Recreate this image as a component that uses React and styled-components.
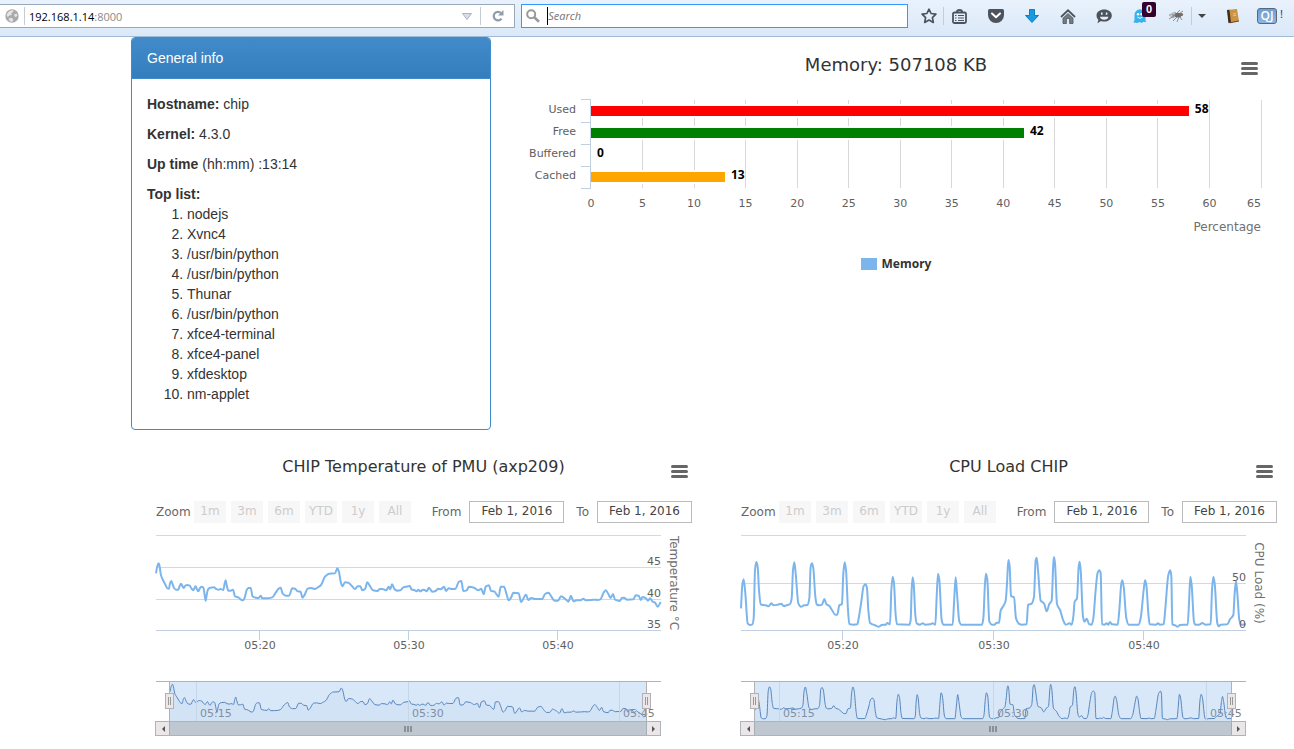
import React from "react";
import styled, { createGlobalStyle } from "styled-components";

const CHART_FONT = '"DejaVu Sans", Verdana, sans-serif';
const LABEL_FONT = '"Noto Sans", "Open Sans", sans-serif';

const GlobalStyle = createGlobalStyle`
  *, *::before, *::after { box-sizing: border-box; }
  body {
    margin: 0;
    background: #fff;
    color: #333;
    font: 14px/20px "Liberation Sans", Arial, sans-serif;
  }
  button, input { font: inherit; color: inherit; }
`;

/* ---------- browser bar ---------- */

const Toolbar = styled.header`
  display: flex;
  gap: 6px;
  height: 37px;
  padding-top: 4px;
  align-items: flex-start;
  background: linear-gradient(#e9f2fc, #dae8f8);
  border-bottom: 1px solid #a3bcd6;
`;

const Field = styled.div`
  display: flex;
  align-items: center;
  flex: ${(p) => p.$grow} 1 0;
  min-width: 0;
  height: 24px;
  background: #fff;
  border: 1px solid ${(p) => (p.$active ? "#3399ff" : "#97a9bb")};
  border-left-width: ${(p) => (p.$flush ? 0 : 1)}px;
`;

const Divider = styled.span`
  width: 1px;
  height: 18px;
  flex: none;
  background: #c5ccd4;
`;

const Address = styled.div`
  position: relative;
  flex: 1;
  height: 22px;
  margin-left: 4px;
  font: 11px/24px "Open Sans", "Noto Sans", sans-serif;
  color: #000;
`;

const AddressInput = styled.input`
  width: 100%;
  height: 22px;
  padding: 0;
  border: 0;
  outline: 0;
  background: transparent;
  color: transparent;
`;

const AddressText = styled.span`
  position: absolute;
  inset: 0;
  pointer-events: none;
  span { color: #8a8a8a; }
`;

const SearchInput = styled.input`
  flex: 1;
  height: 18px;
  min-width: 0;
  margin-left: 4px;
  padding: 0;
  border: 0;
  border-left: 1px solid #000;
  outline: 0;
  font: italic 11px/18px "Open Sans", "Noto Sans", sans-serif;
  &::placeholder { color: #757575; opacity: 1; }
`;

const IconButton = styled.button`
  display: flex;
  align-items: center;
  justify-content: center;
  position: relative;
  flex: none;
  width: ${(p) => p.$w || 36}px;
  height: 24px;
  padding: 0;
  border: 0;
  background: none;
  svg { display: block; overflow: visible; }
`;

const Tools = styled.nav`
  display: flex;
  align-items: center;
  flex: none;
  width: 380px;
  height: 24px;
  padding-left: 1px;
`;

const Badge = styled.span`
  position: absolute;
  top: -2px;
  left: 23px;
  width: 14px;
  height: 15px;
  border-radius: 2px;
  background: #33002f;
  color: #fff;
  font: bold 11px/15px "Liberation Sans", Arial, sans-serif;
  text-align: center;
`;

const QuickJava = styled.button`
  width: 20px;
  height: 16px;
  margin-left: 3px;
  padding: 0;
  border: 1px solid #55687f;
  border-radius: 3px;
  background: linear-gradient(#6f9fd4, #8db4de);
  color: #fff;
  font: 600 12px/14px "Open Sans", "Noto Sans", sans-serif;
`;

const Mark = styled.span`
  margin-left: 3px;
  padding-bottom: 4px;
  color: #4b2a94;
  font: 11px/14px "Noto Sans", sans-serif;
`;

/* ---------- page ---------- */

const Page = styled.main`
  max-width: 1279px;
  padding: 0 8px 0 131px;
`;

const TopRow = styled.div`
  display: grid;
  grid-template-columns: 360px minmax(0, 1fr);
  gap: 30px;
`;

const ChartRow = styled.div`
  display: grid;
  grid-template-columns: repeat(2, minmax(0, 1fr));
  gap: 30px;
  margin: 20px -15px 0 15px;
`;

const Panel = styled.section`
  border: 1px solid #428bca;
  border-radius: 4px;
  overflow: hidden;
`;

const PanelHead = styled.h3`
  margin: 0;
  padding: 10px 15px;
  border-bottom: 1px solid #428bca;
  background: linear-gradient(#428bca, #357ebd);
  color: #fff;
  font-size: 14px;
  font-weight: normal;
`;

const PanelBody = styled.div`
  padding: 15px;
`;

const Line = styled.p`
  margin: 0 0 ${(p) => (p.$tight ? 0 : 10)}px;
`;

const TopList = styled.ol`
  margin: 0 0 10px;
  padding-left: 40px;
`;

/* ---------- charts ---------- */

const ChartCard = styled.section`
  position: relative;
  min-width: 0;
  font-family: ${CHART_FONT};
`;

const ChartTitle = styled.h2`
  margin: 0;
  height: ${(p) => (p.$large ? 56 : 51)}px;
  line-height: ${(p) => (p.$large ? 56 : 34)}px;
  font-size: ${(p) => (p.$large ? 18 : 16)}px;
  font-weight: normal;
  text-align: center;
`;

const MenuButton = styled.button`
  position: absolute;
  top: ${(p) => p.$top}px;
  right: 13px;
  display: flex;
  flex-direction: column;
  gap: 2px;
  width: 17px;
  padding: 0;
  border: 0;
  background: none;
  span {
    height: 3px;
    border-radius: 2px;
    background: #666;
  }
`;

const Plot = styled.svg`
  display: block;
  width: 100%;
  height: auto;
  overflow: visible;
  font-family: ${CHART_FONT};
`;

const Legend = styled.div`
  display: flex;
  align-items: center;
  justify-content: center;
  gap: 5px;
  margin-top: 7px;
  font: bold 12px/20px ${LABEL_FONT};
  &::before {
    content: "";
    width: 16px;
    height: 12px;
    background: #7cb5ec;
  }
`;

const RangeBar = styled.div`
  display: flex;
  align-items: center;
  height: 22px;
  padding: 0 9px 0 10px;
  font-size: 12px;
  line-height: 20px;
  color: #666;
`;

const ZoomGroup = styled.div`
  display: flex;
  align-items: center;
  gap: 5px;
`;

const ZoomLabel = styled.span`
  width: 33px;
`;

const ZoomButton = styled.button`
  width: 32px;
  height: 22px;
  padding: 0 0 2px;
  border: 0;
  background: #f7f7f7;
  &:disabled { color: #ccc; }
`;

const DateGroup = styled.div`
  display: flex;
  align-items: center;
  gap: 8px;
  margin-left: auto;
  label + input + label { margin-left: 4px; }
`;

const DateInput = styled.input`
  width: 95px;
  height: 22px;
  padding: 0 0 2px;
  border: 1px solid #bbb;
  background: #fff;
  color: #444;
  text-align: center;
`;

const Scrollbar = styled.div`
  display: flex;
  height: 15px;
  margin: 0 40px 0 9px;
  border: 1px solid #b0b3b8;
`;

const ArrowButton = styled.button`
  display: flex;
  align-items: center;
  justify-content: center;
  flex: none;
  width: 13px;
  padding: 0;
  border: 0;
  background: #ebe7e8;
`;

const Thumb = styled.div`
  display: flex;
  flex: 1;
  align-items: center;
  justify-content: center;
  gap: 1px;
  background: #bfc8d1;
  border: solid #a7adb5;
  border-width: 0 1px;
  i { width: 2px; height: 6px; background: #8b9097; }
`;

/* Recorded traces, in thirds of a pixel. */
const TEMPERATURE = `33,130 37,108 41,100 44,110 48,136 54,150 62,166 67,175 72,176 75,160 79,153 83,163 87,174 93,179 100,179 104,168 108,161 112,168 116,174 120,168 126,165 134,167 139,175 145,181 149,173 152,169 156,178 160,184 165,174 170,170 175,173 179,195 182,212 185,195 189,178 196,173 207,172 214,177 221,179 227,177 235,180 239,160 242,151 245,165 250,182 257,182 264,179 270,199 280,202 287,208 294,211 299,203 305,180 310,174 317,174 323,200 333,203 341,204 347,197 352,205 365,205 382,202 392,188 400,177 407,173 413,191 422,197 432,197 442,175 450,176 458,184 467,185 472,203 478,196 488,176 498,174 510,177 520,171 528,165 540,140 552,131 570,130 577,115 582,126 587,155 592,169 600,157 610,158 620,167 630,177 638,169 646,169 652,181 660,177 667,157 674,167 684,181 697,183 705,177 716,178 724,181 731,170 736,178 741,163 749,178 758,182 766,181 775,172 790,169 794,167 800,179 808,180 815,184 820,179 826,184 832,180 837,179 845,184 852,173 862,185 872,183 879,176 887,178 897,170 903,183 911,175 922,177 932,176 941,156 949,153 955,183 965,181 972,170 987,173 1000,181 1009,176 1016,193 1022,170 1032,166 1038,183 1047,184 1061,200 1067,170 1077,170 1084,190 1091,211 1098,203 1105,188 1121,190 1128,216 1143,194 1150,210 1159,204 1170,207 1192,207 1200,192 1211,188 1219,200 1229,212 1239,212 1248,199 1261,207 1270,215 1278,197 1285,214 1295,211 1307,211 1315,206 1322,211 1340,210 1350,209 1358,210 1366,208 1375,190 1382,181 1390,192 1397,204 1404,192 1410,209 1425,213 1430,204 1437,203 1447,209 1465,208 1472,196 1481,197 1487,210 1493,201 1503,205 1509,212 1515,205 1523,215 1530,218 1538,230 1547,216`;

const CPU = `33,235 37,165 41,148 46,190 53,280 60,285 67,283 71,265 75,120 79,96 83,110 87,180 92,223 100,225 108,226 116,229 124,220 131,226 143,224 154,221 161,228 170,226 180,222 185,205 189,120 193,97 197,130 205,220 213,230 222,226 232,225 238,205 242,110 246,100 250,115 256,200 260,223 268,226 276,224 283,207 289,222 298,228 306,240 316,254 322,254 328,226 336,222 340,130 344,97 348,120 354,240 358,282 370,284 382,283 386,265 394,215 401,168 407,163 411,175 415,240 420,279 430,284 438,287 447,290 455,285 468,284 472,279 480,283 484,180 488,140 492,160 497,255 501,283 538,284 542,270 545,180 548,142 551,160 556,255 560,280 570,284 578,280 586,284 600,283 608,280 616,284 620,200 624,131 628,150 635,270 640,284 668,284 672,220 677,142 681,190 688,275 694,284 756,284 760,265 765,160 768,131 772,150 778,275 786,284 793,284 799,279 807,278 812,242 820,228 827,212 831,160 834,104 836,90 839,110 843,198 852,202 858,265 868,282 876,284 890,283 894,225 905,221 912,200 917,90 920,83 924,120 932,212 942,220 950,244 958,222 965,212 970,100 972,81 975,100 981,222 990,240 1000,272 1008,284 1018,280 1025,284 1030,260 1034,215 1041,205 1046,110 1049,95 1052,120 1059,260 1063,275 1070,266 1077,282 1085,284 1090,265 1097,180 1103,128 1108,121 1112,130 1116,283 1123,284 1130,280 1135,284 1140,276 1146,283 1163,284 1168,240 1174,160 1177,151 1181,170 1189,265 1196,284 1226,284 1232,265 1241,180 1245,151 1249,165 1255,250 1259,283 1278,284 1284,280 1290,284 1301,283 1306,235 1315,135 1321,121 1324,140 1327,283 1336,286 1343,290 1350,285 1373,284 1377,220 1381,140 1385,165 1392,275 1396,284 1407,284 1417,279 1426,284 1442,283 1446,180 1450,140 1454,160 1462,280 1466,289 1472,284 1492,283 1500,268 1510,255 1514,190 1518,153 1522,190 1528,270 1533,284 1547,283`;

const parse = (trace) => trace.split(" ").map((p) => p.split(",").map(Number));

/* Monotone cubic curve through the points. */
function curve(points) {
  const slope = (i) =>
    (points[i + 1][1] - points[i][1]) / (points[i + 1][0] - points[i][0]);
  const tangent = points.map((_, i) => {
    if (i === 0) return slope(0);
    if (i === points.length - 1) return slope(i - 1);
    const a = slope(i - 1);
    const b = slope(i);
    return a * b <= 0 ? 0 : (2 * a * b) / (a + b);
  });
  let d = `M${points[0][0]} ${points[0][1]}`;
  for (let i = 1; i < points.length; i++) {
    const [x0, y0] = points[i - 1];
    const [x1, y1] = points[i];
    const h = (x1 - x0) / 3;
    d += `C${[x0 + h, y0 + h * tangent[i - 1], x1 - h, y1 - h * tangent[i], x1, y1]
      .map((n) => n.toFixed(2))
      .join(" ")}`;
  }
  return d;
}

function Menu({ top }) {
  return (
    <MenuButton type="button" aria-label="Chart context menu" $top={top}>
      <span /><span /><span />
    </MenuButton>
  );
}

const MEMORY = [
  { name: "Used", value: 58, color: "#f00" },
  { name: "Free", value: 42, color: "#008000" },
  { name: "Buffered", value: 0, color: "none" },
  { name: "Cached", value: 13, color: "#ffa500" },
];

function MemoryChart() {
  const x = (v) => 70 + (v * 670) / 65;
  const ticks = Array.from({ length: 14 }, (_, i) => i * 5);
  return (
    <ChartCard>
      <ChartTitle $large>Memory: 507108 KB</ChartTitle>
      <Menu top={25} />
      <Plot viewBox="0 0 750 154" role="img" aria-label="Memory use by percentage">
        <g stroke="#d8d8d8" shapeRendering="crispEdges">
          {ticks.slice(1).map((t) => (
            <line key={t} x1={Math.floor(x(t)) + 0.5} x2={Math.floor(x(t)) + 0.5} y1="7" y2="95" />
          ))}
        </g>
        {MEMORY.map((m, i) => (
          <g key={m.name} fontSize="11">
            {m.value > 0 && (
              <rect
                x="69" y={12 + i * 22} width={x(m.value) - 68} height="12"
                fill={m.color} stroke="#fff" strokeWidth="2" shapeRendering="crispEdges"
              />
            )}
            <text x="55" y={20 + i * 22} textAnchor="end" fill="#606060">{m.name}</text>
            <text
              x={x(m.value) + 6} y={20 + i * 22} fill="#000"
              fontSize="12" fontWeight="bold" fontFamily={LABEL_FONT}
            >
              {m.value}
            </text>
          </g>
        ))}
        <path
          d="M69.5 6V96M60 6.5H70M60 29.5H70M60 51.5H70M60 73.5H70M60 95.5H70"
          stroke="#c0d0e0" fill="none" shapeRendering="crispEdges"
        />
        <g fontSize="11" fill="#606060" textAnchor="middle">
          {ticks.map((t) => (
            <text key={t} x={t === 65 ? 733 : x(t)} y="114">{t}</text>
          ))}
        </g>
        <text x="740" y="138" textAnchor="end" fontSize="12" fill="#707070">Percentage</text>
      </Plot>
      <Legend>Memory</Legend>
    </ChartCard>
  );
}

function Handle({ x }) {
  return (
    <g shapeRendering="crispEdges">
      <path d={`M${x + 0.5} 5V45`} stroke="#b2b1b6" />
      <rect x={x - 3.5} y="17.5" width="8" height="15" fill="#ebe7e8" stroke="#b2b1b6" />
      <path d={`M${x - 0.5} 21V29M${x + 1.5} 21V29`} stroke="#999" />
    </g>
  );
}

const ZOOMS = ["1m", "3m", "6m", "YTD", "1y", "All"];

function StockChart({ id, title, trace, axis, axisMid, grid, yLabels, ticks, navTicks, navY }) {
  const raw = parse(trace);
  const main = curve(raw.map(([x, y]) => [(x - 3) / 3, y / 3]));
  const nav = curve(
    raw.map(([x, y]) => [24 + ((x - 33) * 477) / 1515, navY.top + ((y - navY.from) * navY.scale) / 3])
  );
  return (
    <ChartCard>
      <ChartTitle>{title}</ChartTitle>
      <Menu top={15} />
      <RangeBar>
        <ZoomGroup>
          <ZoomLabel>Zoom</ZoomLabel>
          {ZOOMS.map((z) => (
            <ZoomButton key={z} type="button" disabled>{z}</ZoomButton>
          ))}
        </ZoomGroup>
        <DateGroup>
          <label htmlFor={`${id}-from`}>From</label>
          <DateInput id={`${id}-from`} defaultValue="Feb 1, 2016" />
          <label htmlFor={`${id}-to`}>To</label>
          <DateInput id={`${id}-to`} defaultValue="Feb 1, 2016" />
        </DateGroup>
      </RangeBar>
      <Plot viewBox="0 -7 555 153" role="img" aria-label={title}>
        <g stroke="#d8d8d8" shapeRendering="crispEdges">
          {grid.map((y) => <line key={y} x1="10" x2="515" y1={y + 0.5} y2={y + 0.5} />)}
        </g>
        <path
          d={`M10 100.5H515${ticks.map(([x]) => `M${x + 0.5} 100V110`).join("")}`}
          stroke="#c0d0e0" shapeRendering="crispEdges"
        />
        <path d={main} fill="none" stroke="#7cb5ec" strokeWidth="2" strokeLinejoin="round" />
        <g fontSize="11" fill="#606060">
          {yLabels.map(([y, t]) => (
            <text key={t} x="515" y={y} textAnchor="end">{t}</text>
          ))}
          {ticks.map(([x, t]) => (
            <text key={t} x={x + 1} y="119" textAnchor="middle">{t}</text>
          ))}
        </g>
        <text
          transform={`translate(524 ${axisMid}) rotate(90)`}
          textAnchor="middle" fontSize="12" fill="#707070"
        >
          {axis}
        </text>
      </Plot>
      <Plot viewBox="0 0 555 45" role="img" aria-label={`${title} range`}>
        <path d={`${nav}V45H24Z`} fill="#4572a7" fillOpacity="0.05" />
        <path d={nav} fill="none" stroke="#4572a7" strokeWidth="1" />
        <g stroke="#e2e6ea" shapeRendering="crispEdges">
          {navTicks.map(([x]) => <line key={x} x1={x + 0.5} x2={x + 0.5} y1="6" y2="45" />)}
        </g>
        <g fontSize="11" fill="#808080">
          {navTicks.map(([x, t]) => <text key={t} x={x + 4} y="41">{t}</text>)}
        </g>
        <rect x="24" y="6" width="477" height="39" fill="#80b3ec" fillOpacity="0.3" />
        <path d="M10 5.5H515" stroke="#b2b1b6" shapeRendering="crispEdges" />
        <Handle x={23} />
        <Handle x={500} />
      </Plot>
      <Scrollbar>
        <ArrowButton type="button" aria-label="Scroll left">
          <svg width="4" height="6"><path d="M4 0V6L1 3Z" fill="#555" /></svg>
        </ArrowButton>
        <Thumb><i /><i /><i /></Thumb>
        <ArrowButton type="button" aria-label="Scroll right">
          <svg width="4" height="6"><path d="M0 0V6L3 3Z" fill="#555" /></svg>
        </ArrowButton>
      </Scrollbar>
    </ChartCard>
  );
}

/* ---------- toolbar icons ---------- */

const GlobeIcon = () => (
  <svg width="14" height="14" viewBox="0 0 14 14">
    <circle cx="7" cy="7" r="6.7" fill="#a9a9a9" />
    <path d="M1.5 6C2.5 3 5 1.3 8 1.2L8.5 3 6 4 7.2 5.4 4.6 6.6 2.6 8ZM9 5.4L11.5 4.5 12.6 6.5 11 8 9.6 7.6ZM3.4 9.4L6.6 8.8 8.4 10.6 7.4 12.8C5.4 12.8 4 11.4 3.4 9.4Z" fill="#e4e4e4" />
  </svg>
);

const ReloadIcon = () => (
  <svg width="12" height="12" viewBox="0 0 12 12">
    <path d="M9.5 8.6A4.3 4.3 0 1 1 9 3" fill="none" stroke="#8f9dad" strokeWidth="2.2" />
    <path d="M11.5 0V5.6H6Z" fill="#8f9dad" />
  </svg>
);

const SearchIcon = () => (
  <svg width="14" height="14" viewBox="0 0 14 14">
    <circle cx="5.2" cy="5.2" r="4" fill="none" stroke="#999" strokeWidth="2" />
    <path d="M8.3 8.3L13 12.7" stroke="#999" strokeWidth="2.6" />
  </svg>
);

const StarIcon = () => (
  <svg width="16" height="16" viewBox="0 0 16 16">
    <path d="M8 1.2L10.1 5.5 14.9 6.2 11.4 9.6 12.3 14.4 8 12.1 3.7 14.4 4.6 9.6 1.1 6.2 5.9 5.5Z" fill="none" stroke="#4c535c" strokeWidth="1.7" strokeLinejoin="round" />
  </svg>
);

const ListIcon = () => (
  <svg width="15" height="15" viewBox="0 0 15 15" fill="none" stroke="#4c535c">
    <path d="M5 3C5 .2 10 .2 10 3" strokeWidth="2" />
    <rect x="1" y="3.5" width="13" height="10.5" rx="1.5" strokeWidth="1.8" />
    <path d="M3 6.5H4.5M6 6.5H12M3 9H4.5M6 9H12M3 11.5H4.5M6 11.5H12" strokeWidth="1.2" />
  </svg>
);

const PocketIcon = () => (
  <svg width="16" height="14" viewBox="0 0 16 14">
    <path d="M1.5 0H14.5Q16 0 16 1.5V6A8 8 0 0 1 0 6V1.5Q0 0 1.5 0Z" fill="#4c535c" />
    <path d="M4 4.5L8 8.3 12 4.5" fill="none" stroke="#fff" strokeWidth="2" strokeLinecap="round" strokeLinejoin="round" />
  </svg>
);

const DownIcon = () => (
  <svg width="14" height="14" viewBox="0 0 14 14">
    <path d="M4.5 .5H9.5V6.5H13.5L7 13.5 .5 6.5H4.5Z" fill="#1a9adb" stroke="#0e7fc0" />
  </svg>
);

const HomeIcon = () => (
  <svg width="16" height="15" viewBox="0 0 16 15">
    <path d="M1 8L8 1.3 15 8" fill="none" stroke="#4c535c" strokeWidth="1.8" />
    <path d="M3 9.2L8 4.6 13 9.2V14.5H9.6V9.5H6.4V14.5H3Z" fill="#737b84" stroke="#4c535c" strokeWidth=".8" />
  </svg>
);

const ChatIcon = () => (
  <svg width="16" height="15" viewBox="0 0 16 15">
    <path d="M8.2 .5C12.6 .5 15.8 3 15.8 6.5S12.6 12.6 8.2 12.6C6.8 12.6 5.8 12.4 5 12L1.5 14.2 2.4 10.8C1.2 9.7 .5 8.2 .5 6.5 .5 3 3.8 .5 8.2 .5Z" fill="#4c535c" />
    <path d="M4 7.8H12.5C12 10 10.4 10.8 8.2 10.8S4.4 10 4 7.8Z" fill="#e5effa" />
    <path d="M5.8 3.5V5.8M10.6 3.5V5.8" stroke="#e5effa" strokeWidth="1.6" />
  </svg>
);

const GhostIcon = () => (
  <svg width="14" height="14" viewBox="0 0 14 14">
    <path d="M1.5 11V6A5.5 5.8 0 0 1 12.5 6V11L13 13.2 10.4 12.8 8.8 14 6.6 13 4.4 14 .4 13.4Z" fill="#36b3ec" />
    <circle cx="5" cy="5.2" r="1.2" fill="#fff" /><circle cx="8.6" cy="5.2" r="1.2" fill="#fff" />
    <path d="M4.5 8.2Q7 10.4 9.5 8.2" fill="none" stroke="#fff" />
  </svg>
);

const FlyIcon = () => (
  <svg width="16" height="13" viewBox="0 0 16 13">
    <path d="M1 5L7 2 10 5 5 8Z" fill="#c6c9cc" stroke="#8e9296" strokeWidth=".6" />
    <ellipse cx="10" cy="5.2" rx="3.4" ry="2.4" fill="#6b6b6b" />
    <circle cx="13.5" cy="4.5" r="1.6" fill="#7d6863" />
    <path d="M9 7L5 11M11 7L9 12M12 7L14 10M9 3L12 0M6 6L1 9M12 3L15 1" stroke="#777" strokeWidth=".8" />
    <path d="M4 4L8 5 5 7Z" fill="#888" />
  </svg>
);

const BookIcon = () => (
  <svg width="14" height="14" viewBox="0 0 14 14">
    <path d="M1 1L11 0 13 12 3 14Z" fill="#c99544" />
    <path d="M1 1L3.4 .8 5 13.6 2.4 14Z" fill="#3d2d22" />
    <path d="M3.8 13.8L13 12" stroke="#69431f" />
    <path d="M7 5L10 4.6M7.3 6.7L10.3 6.3" stroke="#e9c480" />
  </svg>
);

function BrowserBar() {
  return (
    <Toolbar>
      <Field $grow={516} $flush>
        <IconButton type="button" aria-label="Site identity" $w={24}><GlobeIcon /></IconButton>
        <Divider />
        <Address>
          <AddressInput aria-label="Address" defaultValue="192.168.1.14:8000" />
          <AddressText aria-hidden="true">192.168.1.14<span>:8000</span></AddressText>
        </Address>
        <IconButton type="button" aria-label="History" $w={26}>
          <svg width="10" height="7" viewBox="0 0 10 7"><path d="M.5 .5H9.5L5 6.5Z" fill="#d8dee8" stroke="#a9b2c0" /></svg>
        </IconButton>
        <Divider />
        <IconButton type="button" aria-label="Reload" $w={33}><ReloadIcon /></IconButton>
      </Field>
      <Field $grow={386} $active>
        <IconButton type="button" aria-label="Search engine" $w={21}><SearchIcon /></IconButton>
        <SearchInput aria-label="Search" placeholder="Search" />
      </Field>
      <Tools>
        <IconButton type="button" aria-label="Bookmark" $w={28}><StarIcon /></IconButton>
        <Divider />
        <IconButton type="button" aria-label="Bookmarks list" $w={31}><ListIcon /></IconButton>
        <IconButton type="button" aria-label="Pocket" $w={41}><PocketIcon /></IconButton>
        <IconButton type="button" aria-label="Downloads" $w={31}><DownIcon /></IconButton>
        <IconButton type="button" aria-label="Home" $w={41}><HomeIcon /></IconButton>
        <IconButton type="button" aria-label="Chat" $w={31}><ChatIcon /></IconButton>
        <IconButton type="button" aria-label="Trackers" $w={41}><GhostIcon /><Badge>0</Badge></IconButton>
        <IconButton type="button" aria-label="Firebug" $w={31}><FlyIcon /></IconButton>
        <Divider />
        <IconButton type="button" aria-label="More" $w={20}>
          <svg width="8" height="4"><path d="M0 0H8L4 4Z" fill="#444" /></svg>
        </IconButton>
        <IconButton type="button" aria-label="Notebook" $w={42}><BookIcon /></IconButton>
        <QuickJava type="button">QJ</QuickJava>
        <Mark>!</Mark>
      </Tools>
    </Toolbar>
  );
}

const PROCESSES = [
  "nodejs", "Xvnc4", "/usr/bin/python", "/usr/bin/python", "Thunar",
  "/usr/bin/python", "xfce4-terminal", "xfce4-panel", "xfdesktop", "nm-applet",
];

export default function App() {
  return (
    <>
      <GlobalStyle />
      <BrowserBar />
      <Page>
        <TopRow>
          <Panel>
            <PanelHead>General info</PanelHead>
            <PanelBody>
              <Line><b>Hostname:</b> chip</Line>
              <Line><b>Kernel:</b> 4.3.0</Line>
              <Line><b>Up time</b> (hh:mm) :13:14</Line>
              <Line $tight><b>Top list:</b></Line>
              <TopList>
                {PROCESSES.map((p, i) => <li key={i}>{p}</li>)}
              </TopList>
            </PanelBody>
          </Panel>
          <MemoryChart />
        </TopRow>
        <ChartRow>
          <StockChart
            id="temp"
            title="CHIP Temperature of PMU (axp209)"
            trace={TEMPERATURE}
            axis="Temperature °C"
            axisMid={53}
            grid={[5, 37, 69]}
            yLabels={[[35, "45"], [67, "40"], [98, "35"]]}
            ticks={[[113, "05:20"], [262, "05:30"], [411, "05:40"]]}
            navTicks={[[50, "05:15"], [262, "05:30"], [473, "05:45"]]}
            navY={{ top: 12, from: 115, scale: 0.755 }}
          />
          <StockChart
            id="cpu"
            title="CPU Load CHIP"
            trace={CPU}
            axis="CPU Load (%)"
            axisMid={53}
            grid={[5, 53]}
            yLabels={[[51, "50"], [98, "0"]]}
            ticks={[[111, "05:20"], [262, "05:30"], [412, "05:40"]]}
            navTicks={[[48, "05:15"], [262, "05:30"], [475, "05:45"]]}
            navY={{ top: 11, from: 97, scale: 0.508 }}
          />
        </ChartRow>
      </Page>
    </>
  );
}
